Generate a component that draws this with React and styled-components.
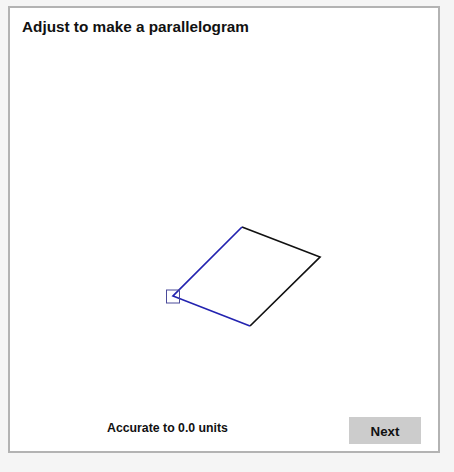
import React from "react";
import styled, { createGlobalStyle } from "styled-components";

const GlobalStyle = createGlobalStyle`
  body {
    margin: 0;
    background: #f5f5f5;
    font-family: "Liberation Sans", Arial, sans-serif;
  }
`;

const points = {
  top: [232, 187],
  right: [310, 217],
  bottom: [240, 286],
  left: [163, 256],
};

const App = () => {
  const { top, right, bottom, left } = points;
  return (
    <>
      <GlobalStyle />
      <Panel>
        <Title>Adjust to make a parallelogram</Title>
        <Canvas>
          <svg width="428" height="370" viewBox="0 0 428 370">
            <polyline
              points={`${top.join(",")} ${right.join(",")} ${bottom.join(",")}`}
              fill="none"
              stroke="#111"
              strokeWidth="1.7"
            />
            <polyline
              points={`${bottom.join(",")} ${left.join(",")} ${top.join(",")}`}
              fill="none"
              stroke="#2323b0"
              strokeWidth="1.7"
            />
            <rect
              x={left[0] - 6.5}
              y={left[1] - 6}
              width="13"
              height="13"
              fill="none"
              stroke="#4a4a9a"
              strokeWidth="1"
            />
          </svg>
        </Canvas>
        <Footer>
          <Status>Accurate to 0.0 units</Status>
          <NextButton>Next</NextButton>
        </Footer>
      </Panel>
    </>
  );
};

const Panel = styled.div`
  margin: 6px 8px;
  width: 428px;
  height: 443px;
  border: 2px solid #b3b3b3;
  background: #fff;
  display: flex;
  flex-direction: column;
`;

const Title = styled.div`
  padding: 10px 12px 0;
  height: 22px;
  font-size: 15.3px;
  font-weight: bold;
  color: #111;
`;

const Canvas = styled.div`
  flex: 1;
  svg {
    display: block;
  }
`;

const Footer = styled.div`
  height: 41px;
  display: flex;
  align-items: center;
  justify-content: space-between;
  padding: 0 17px 0 97px;
`;

const Status = styled.div`
  font-size: 12.3px;
  font-weight: bold;
  color: #111;
  margin-bottom: 6px;
`;

const NextButton = styled.button`
  width: 72px;
  height: 27px;
  border: none;
  background: #cccccc;
  font-family: "Liberation Sans", Arial, sans-serif;
  font-size: 13.3px;
  font-weight: bold;
  color: #111;
  padding: 2px 0 0;
`;

export default App;
